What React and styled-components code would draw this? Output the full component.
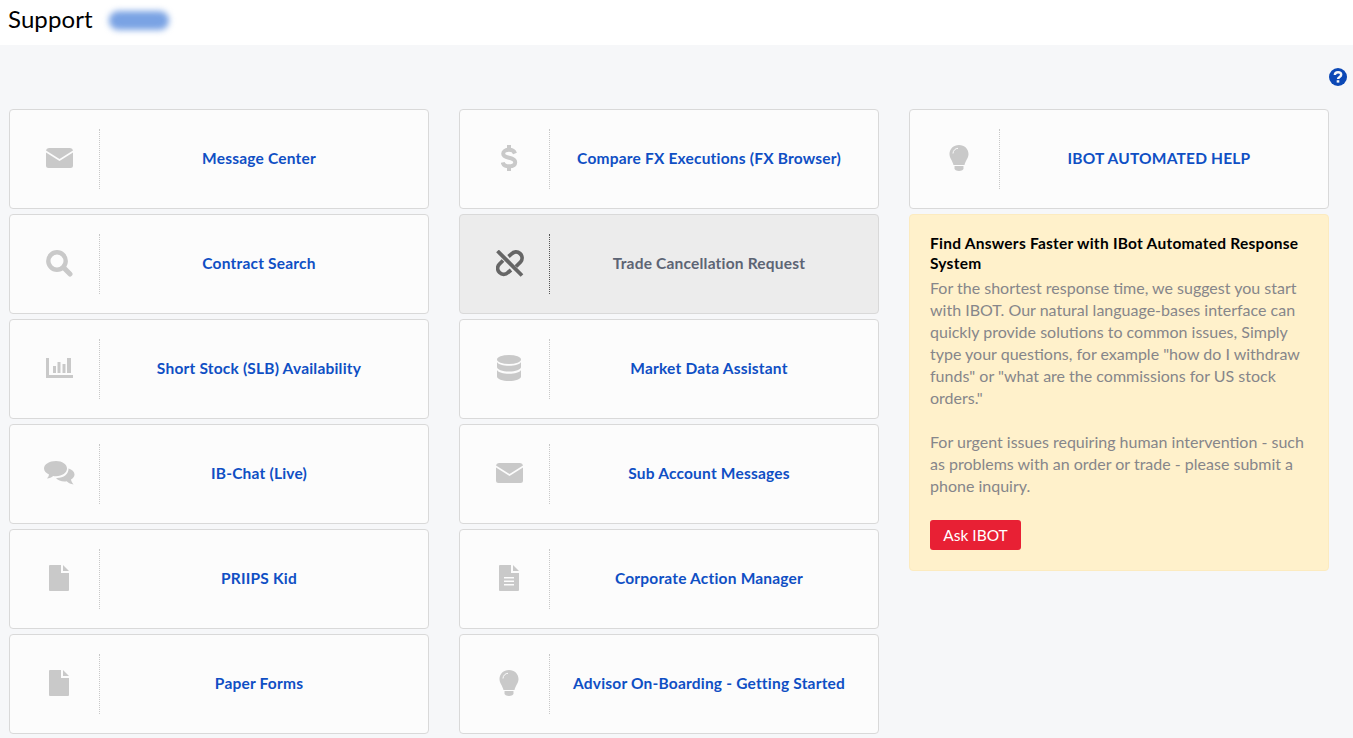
import React from 'react';
import styled, { createGlobalStyle } from 'styled-components';

const GlobalStyle = createGlobalStyle`
  html, body {
    margin: 0;
    padding: 0;
    height: 100%;
    overflow: hidden;
  }
  body {
    background: #f6f7f9;
    font-family: Lato, "Open Sans", sans-serif;
  }
`;

// Header
const Header = styled.header`
  display: flex;
  align-items: center;
  height: 45px;
  padding: 0 8px 8px;
  box-sizing: border-box;
  background: #fff;
`;

const Title = styled.h1`
  margin: 0;
  font-size: 24px;
  letter-spacing: 0.1px;
  font-weight: 400;
  color: #000;
`;

const BlurredBadge = styled.span`
  width: 60px;
  height: 19px;
  margin-left: 16px;
  margin-top: 3px;
  border-radius: 9px;
  background: #7aa3e4;
  filter: blur(3px);
`;

const Main = styled.main`
  padding: 23px 9px 0;
`;

const HelpRow = styled.div`
  display: flex;
  justify-content: flex-end;
  height: 41px;
  margin-right: -9px;
  padding-right: 6px;
  color: #0c48b6;
`;

const Columns = styled.div`
  display: grid;
  grid-template-columns: repeat(3, 420px);
  column-gap: 30px;
  align-items: start;
`;

const Column = styled.div`
  display: flex;
  flex-direction: column;
  gap: 5px;
`;

// Cards
const Card = styled.a`
  display: flex;
  height: 100px;
  box-sizing: border-box;
  padding: 19px 10px;
  border: 1px solid #d9d9d9;
  border-radius: 4px;
  background: ${(p) => (p.$active ? '#ececec' : '#fcfcfc')};
  cursor: pointer;
`;

const IconSlot = styled.div`
  display: flex;
  align-items: center;
  justify-content: center;
  width: 80px;
  height: 60px;
  padding-bottom: 2px;
  box-sizing: border-box;
  border-right: 1px dotted ${(p) => (p.$active ? '#555' : '#c8c8c8')};
  color: ${(p) => (p.$active ? '#666' : '#c9c9c9')};
`;

const Label = styled.span`
  flex: 1;
  display: flex;
  align-items: center;
  justify-content: center;
  padding-bottom: 2px;
  font-size: 15.5px;
  font-weight: 700;
  letter-spacing: 0.2px;
  color: ${(p) => (p.$active ? '#5c6474' : '#0f4fc4')};
`;

// Notice panel
const Notice = styled.section`
  box-sizing: border-box;
  height: 357px;
  padding: 18px 20px 20px;
  border: 1px solid #fcebc0;
  border-radius: 4px;
  background: #fff1cb;
`;

const NoticeTitle = styled.h2`
  margin: 0 0 4px;
  font-size: 15.5px;
  line-height: 20px;
  font-weight: 700;
  letter-spacing: 0.25px;
  color: #000;
`;

const NoticeText = styled.p`
  margin: 0 0 22px;
  font-size: 16px;
  line-height: 22px;
  color: #86868a;
`;

const AskButton = styled.button`
  display: block;
  width: 91px;
  height: 30px;
  margin-top: 23px;
  padding: 0;
  border: none;
  border-radius: 3px;
  background: #e82034;
  color: #fff;
  font-family: inherit;
  font-size: 15.5px;
`;

// Icons
const EnvelopeIcon = () => (
  <svg width="27" height="20" viewBox="0 0 27 20">
    <path fill="currentColor" d="M3 0h21a3 3 0 0 1 3 2.600L13.500 11 0 2.600A3 3 0 0 1 3 0z" />
    <path fill="currentColor" d="M0 4.600l13.500 8.400L27 4.600V17.500a2.500 2.500 0 0 1-2.500 2.500h-22A2.500 2.500 0 0 1 0 17.500z" />
  </svg>
);

const SearchIcon = () => (
  <svg width="27" height="27" viewBox="0 0 27 27">
    <circle cx="11" cy="11" r="8.700" fill="none" stroke="currentColor" strokeWidth="4.400" />
    <path d="M17.500 17.500L24 24" stroke="currentColor" strokeWidth="5" strokeLinecap="round" />
  </svg>
);

const ChartIcon = () => (
  <svg width="27" height="20" viewBox="0 0 27 20">
    <path fill="currentColor" d="M0 0h3v17h24v3H0z" />
    <path fill="currentColor" d="M7 8h3v7H7zM11.500 4h3v11h-3zM16.500 6h3v9h-3zM21 0h4v15h-4z" />
  </svg>
);

const ChatIcon = () => (
  <svg width="31" height="24" viewBox="0 0 31 24">
    <path fill="currentColor" d="M12 0c6.200 0 11 3.200 11 7.600s-4.800 7.600-11 7.600c-1 0-1.900-.1-2.800-.2-1.600 1.500-3.700 2.200-6.200 2.400 1-1 1.800-2.300 2-3.900C2.100 12.200 0 10.100 0 7.600 0 3.200 5.300 0 12 0z" />
    <path fill="currentColor" d="M24.500 7.500c3.600 1 6 3.300 6 6 0 2.100-1.300 3.800-3.500 5 .2 1.800 1.200 3.500 2.600 5-2.700-.3-5-1.500-6.900-3.200-.8.100-1.400.2-2.200.2-3.700 0-6.800-1.400-8.500-3.500 7 .4 13.200-3.300 12.500-10.500z" />
  </svg>
);

const FileIcon = ({ lines }) => (
  <svg width="21" height="26" viewBox="0 0 21 26">
    <path fill="currentColor" d="M1 0h11v8h8v17a1 1 0 0 1-1 1H1a1 1 0 0 1-1-1V1a1 1 0 0 1 1-1z" />
    <path fill="currentColor" d="M14 0l6 6h-6z" />
    {lines && <path fill="#fcfcfc" d="M5 12h10v1.500H5zM5 15.500h10V17H5zM5 19h10v1.500H5z" />}
  </svg>
);

const DollarIcon = () => (
  <svg width="17" height="26" viewBox="0 0 17 26">
    <path fill="none" stroke="currentColor" strokeWidth="4" d="M14 8.500c-.8-2.400-3-3.700-6-3.700-3.400 0-5.800 1.500-5.800 3.900 0 5.500 12 2.500 12 8.500 0 2.700-2.600 4.100-6.200 4.100-3.300 0-5.600-1.300-6.300-3.900" />
    <path fill="currentColor" d="M6 0h4v5H6zM6 21h4v5H6z" />
  </svg>
);

const UnlinkIcon = () => (
  <svg width="28" height="27" viewBox="0 0 28 27">
    <path fill="none" stroke="currentColor" strokeWidth="3.800" d="M12.500 6.500L15.500 4a6 6 0 0 1 9 8l-4.500 4.500" />
    <path fill="none" stroke="currentColor" strokeWidth="3.800" d="M7 10.500L3.500 14a6 6 0 0 0 8.500 8.500l3-2.500" />
    <path stroke="currentColor" strokeWidth="3.800" d="M1.500 1L26 25.500" />
  </svg>
);

const DatabaseIcon = () => (
  <svg width="25" height="26" viewBox="0 0 25 26">
    <ellipse cx="12" cy="4.500" rx="12" ry="4.500" fill="currentColor" />
    <path fill="currentColor" d="M0 7c1.500 2.500 6 3.800 12 3.800S22.500 9.500 24 7v5c0 2.500-5.400 4.500-12 4.500S0 14.500 0 12z" />
    <path fill="currentColor" d="M0 15c1.500 2.500 6 3.800 12 3.800S22.500 17.500 24 15v6.500c0 2.500-5.400 4.500-12 4.500S0 24 0 21.500z" />
  </svg>
);

const BulbIcon = () => (
  <svg width="21" height="26" viewBox="0 0 21 26">
    <path fill="currentColor" d="M10 0c5.500 0 9.500 3.900 9.500 9 0 4.500-3.200 6.800-4 11h-11c-.8-4.200-4-6.500-4-11C.5 3.900 4.500 0 10 0z" />
    <path fill="none" stroke="#fcfcfc" strokeWidth="1" d="M4 8.500C4 5.500 6.500 3.300 9 3.300" />
    <path fill="currentColor" d="M5.500 21h9v2.500c0 1.500-2 2.500-4.500 2.500s-4.500-1-4.500-2.500z" />
  </svg>
);

const HelpIcon = () => (
  <svg width="18" height="18" viewBox="0 0 18 18">
    <circle cx="9" cy="9" r="9" fill="currentColor" />
    <path fill="none" stroke="#f6f7f9" strokeWidth="2.400" d="M5.800 7c.1-1.700 1.400-2.700 3.200-2.700s3.200 1 3.200 2.500c0 2.200-3.200 2.100-3.200 4.300" />
    <rect x="7.700" y="12.200" width="2.600" height="2.400" fill="#f6f7f9" />
  </svg>
);

const columnOne = [
  { label: 'Message Center', icon: <EnvelopeIcon /> },
  { label: 'Contract Search', icon: <SearchIcon /> },
  { label: 'Short Stock (SLB) Availability', icon: <ChartIcon /> },
  { label: 'IB-Chat (Live)', icon: <ChatIcon /> },
  { label: 'PRIIPS Kid', icon: <FileIcon /> },
  { label: 'Paper Forms', icon: <FileIcon /> },
];

const columnTwo = [
  { label: 'Compare FX Executions (FX Browser)', icon: <DollarIcon /> },
  { label: 'Trade Cancellation Request', icon: <UnlinkIcon />, active: true },
  { label: 'Market Data Assistant', icon: <DatabaseIcon /> },
  { label: 'Sub Account Messages', icon: <EnvelopeIcon /> },
  { label: 'Corporate Action Manager', icon: <FileIcon lines /> },
  { label: 'Advisor On-Boarding - Getting Started', icon: <BulbIcon /> },
];

const SupportCard = ({ label, icon, active }) => (
  <Card $active={active}>
    <IconSlot $active={active}>{icon}</IconSlot>
    <Label $active={active}>{label}</Label>
  </Card>
);

const App = () => (
  <>
    <GlobalStyle />
    <Header>
      <Title>Support</Title>
      <BlurredBadge />
    </Header>
    <Main>
      <HelpRow>
        <HelpIcon />
      </HelpRow>
      <Columns>
        <Column>
          {columnOne.map((item) => (
            <SupportCard key={item.label} {...item} />
          ))}
        </Column>
        <Column>
          {columnTwo.map((item) => (
            <SupportCard key={item.label} {...item} />
          ))}
        </Column>
        <Column>
          <SupportCard label="IBOT AUTOMATED HELP" icon={<BulbIcon />} />
          <Notice>
            <NoticeTitle>Find Answers Faster with IBot Automated Response System</NoticeTitle>
            <NoticeText>
              For the shortest response time, we suggest you start with IBOT. Our natural
              language-bases interface can quickly provide solutions to common issues, Simply
              type your questions, for example "how do I withdraw funds" or "what are the
              commissions for US stock orders."
            </NoticeText>
            <NoticeText>
              For urgent issues requiring human intervention - such as problems with an order
              or trade - please submit a phone inquiry.
            </NoticeText>
            <AskButton>Ask IBOT</AskButton>
          </Notice>
        </Column>
      </Columns>
    </Main>
  </>
);

export default App;
